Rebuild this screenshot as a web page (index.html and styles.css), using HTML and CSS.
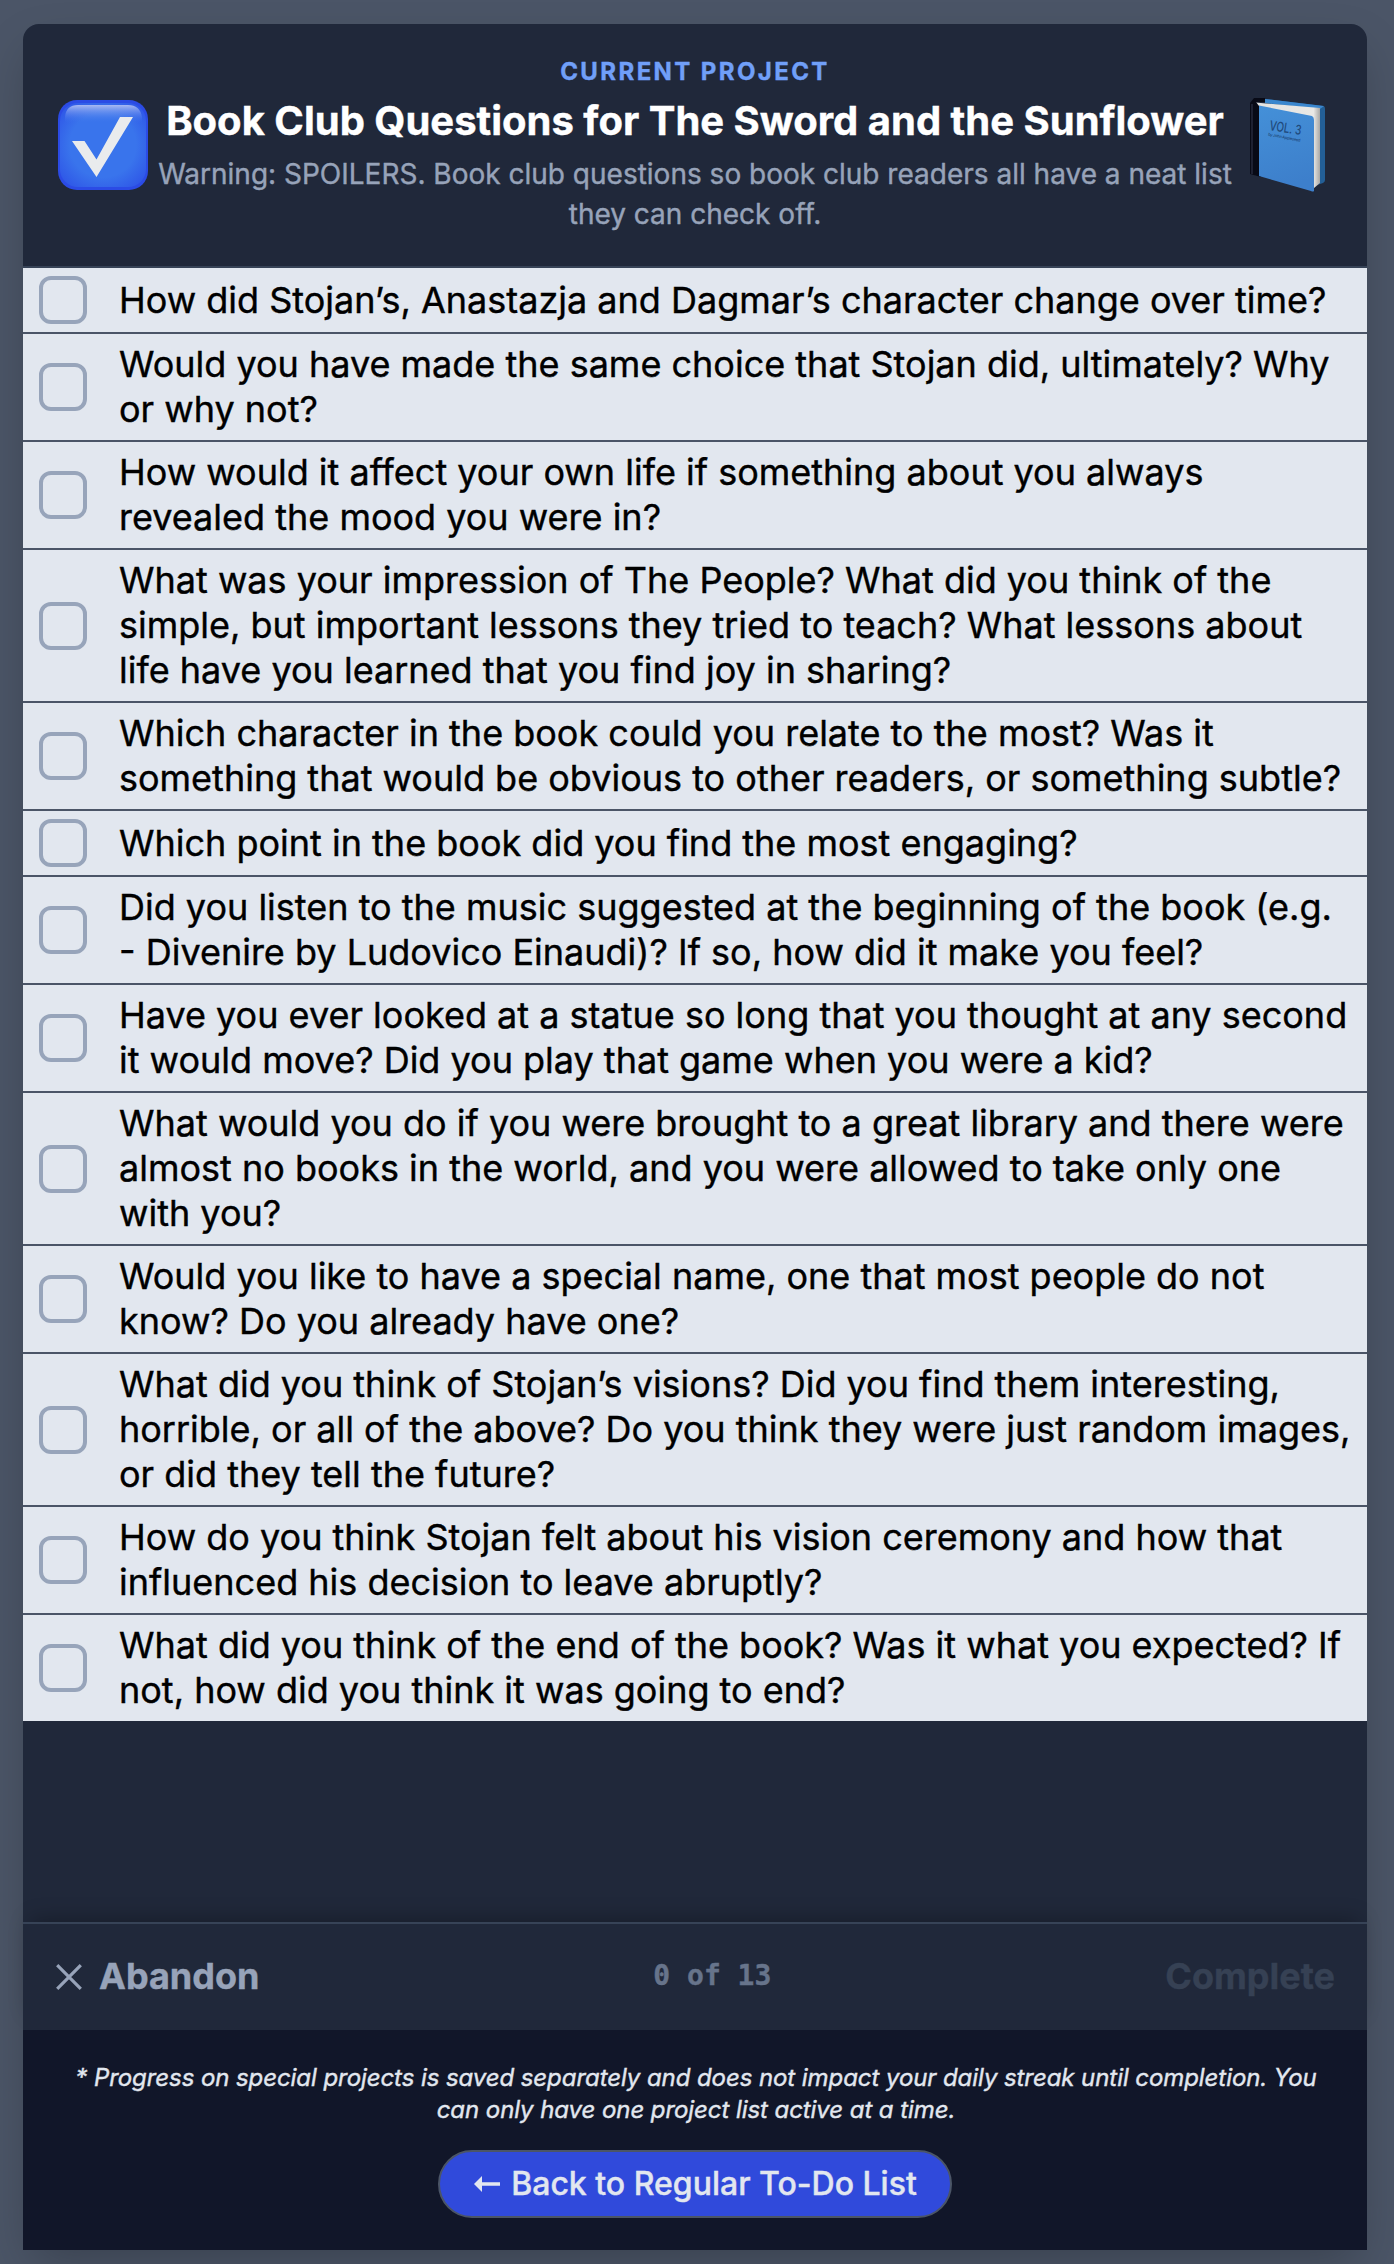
FILE: index.html
```
<!DOCTYPE html>
<html lang="en">
<head>
	<meta charset="UTF-8">
	<meta name="viewport" content="width=device-width, initial-scale=1">
	<title>Book Club Questions for The Sword and the Sunflower</title>

	<link rel="stylesheet" href="styles.css">
</head>
<body>

	<div class="card">
		<div class="header">
			<svg class="icon-check" viewBox="0 0 90 90">
				<defs>
					<radialGradient id="tile" cx="50%" cy="50%" r="70%">
						<stop offset="0.55" stop-color="#3974ec"/>
						<stop offset="1" stop-color="#2c4fe6"/>
					</radialGradient>
					<linearGradient id="shine" x1="0" y1="0" x2="0" y2="1">
						<stop offset="0" stop-color="#a9b9f2"/>
						<stop offset="1" stop-color="#3974ec" stop-opacity="0"/>
					</linearGradient>
				</defs>
				<rect width="90" height="90" rx="19" fill="#2b4be5"/>
				<rect x="2" y="3" width="86" height="84" rx="18" fill="url(#tile)"/>
				<path d="M7 17Q8 5 20 5H70Q82 5 84 17V23H7Z" fill="url(#shine)"/>
				<path d="M14 41H26.500L38.500 59.500L62 17H75L38.500 77Z" fill="#e9ebed"/>
			</svg>
			<div class="header-text">
				<p class="label">Current Project</p>
				<h1 class="title">Book Club Questions for The Sword and the Sunflower</h1>
				<p class="desc">Warning: SPOILERS. Book club questions so book club readers all have a neat list they can check off.</p>
			</div>
			<svg class="icon-book" viewBox="0 0 76 94">
				<defs>
					<linearGradient id="cover" x1="0" y1="0" x2="0.2" y2="1">
						<stop offset="0" stop-color="#4490d8"/>
						<stop offset="1" stop-color="#3d7fcb"/>
					</linearGradient>
					<linearGradient id="pages" x1="0" y1="0" x2="1" y2="0">
						<stop offset="0" stop-color="#e4e3e1"/>
						<stop offset="0.9" stop-color="#e9e8e5"/>
						<stop offset="1" stop-color="#a8a7a5"/>
					</linearGradient>
				</defs>
				<path d="M16 1L74 8Q76 8 76 11V82Q76 84 74 85L68 87V12L16 5Z" fill="#235f96"/>
				<path d="M16 1L75 8L71 11L16 5Z" fill="#3b87ce"/>
				<path d="M6 4.500L71 10V85L65 90L62 20L10 9Z" fill="url(#pages)"/>
				<path d="M1 5L5 0H16V4L7 4L10 8L12 79L1 76Z" fill="#080a16"/>
				<path d="M3 6V76" stroke="#34394f" stroke-width="1"/>
				<path d="M10 7.500L63 18Q65 19 65 22V93Q64 94 62 93L10 78Z" fill="url(#cover)"/>
				<text x="20" y="32" class="book-vol" transform="rotate(9 20 32)" textLength="32" lengthAdjust="spacingAndGlyphs">VOL. 3</text>
				<text x="19" y="37.500" class="book-by" transform="rotate(11 19 37)" textLength="33">by John Appleseed</text>
			</svg>
		</div>

		<ul class="list">
			<li><span class="checkbox"></span><p>How did Stojan’s, Anastazja and Dagmar’s character change over time?</p></li>
			<li><span class="checkbox"></span><p>Would you have made the same choice that Stojan did, ultimately? Why or why not?</p></li>
			<li><span class="checkbox"></span><p>How would it affect your own life if something about you always revealed the mood you were in?</p></li>
			<li><span class="checkbox"></span><p>What was your impression of The People? What did you think of the simple, but important lessons they tried to teach? What lessons about life have you learned that you find joy in sharing?</p></li>
			<li><span class="checkbox"></span><p>Which character in the book could you relate to the most? Was it something that would be obvious to other readers, or something subtle?</p></li>
			<li><span class="checkbox"></span><p>Which point in the book did you find the most engaging?</p></li>
			<li><span class="checkbox"></span><p>Did you listen to the music suggested at the beginning of the book (e.g. - Divenire by Ludovico Einaudi)? If so, how did it make you feel?</p></li>
			<li><span class="checkbox"></span><p>Have you ever looked at a statue so long that you thought at any second it would move? Did you play that game when you were a kid?</p></li>
			<li><span class="checkbox"></span><p>What would you do if you were brought to a great library and there were almost no books in the world, and you were allowed to take only one with you?</p></li>
			<li><span class="checkbox"></span><p>Would you like to have a special name, one that most people do not know? Do you already have one?</p></li>
			<li><span class="checkbox"></span><p>What did you think of Stojan’s visions? Did you find them interesting, horrible, or all of the above? Do you think they were just random images, or did they tell the future?</p></li>
			<li><span class="checkbox"></span><p>How do you think Stojan felt about his vision ceremony and how that influenced his decision to leave abruptly?</p></li>
			<li><span class="checkbox"></span><p>What did you think of the end of the book? Was it what you expected? If not, how did you think it was going to end?</p></li>
		</ul>

		<div class="actions">
			<button class="abandon">
				<svg viewBox="0 0 28 28"><path d="M2.200 2.200L25.800 25.800M25.800 2.200L2.200 25.800"/></svg>
				Abandon
			</button>
			<span class="count">0 of 13</span>
			<button class="complete" disabled>Complete</button>
		</div>

		<div class="note">
			<p>* Progress on special projects is saved separately and does not impact your daily streak until completion. You can only have one project list active at a time.</p>
			<a class="back" href="#">
				<svg viewBox="0 0 26 16"><path d="M0 8L8 0V6.200H26V9.800H8V16Z"/></svg>
				Back to Regular To-Do List
			</a>
		</div>
	</div>

</body>
</html>
```
FILE: styles.css
```
*{
	margin: 0;
	padding: 0;
	box-sizing: border-box;
}

body{
	min-height: 2264px;
	padding: 24px 27px 14px 23px;
	background: #4b5567;
	font-family: Inter, sans-serif;
	-webkit-text-stroke: 0.4px;
}

ul{
	list-style: none;
}

button{
	background: none;
	border: 0;
	font: inherit;
}

.card{
	display: flex;
	flex-direction: column;
	height: 2226px;
	background: #20283a;
	border-radius: 16px 16px 0 0;
	box-shadow: 0 20px 50px -10px rgba(0,0,0,0.25);
}

/*header*/
.header{
	display: flex;
	justify-content: space-between;
	padding: 32px 42px 32px 35px;
	height: 244px;
	border-bottom: 2px solid #374357;
}

.icon-check{
	width: 90px;
	height: 90px;
	margin-top: 44px;
	flex: none;
}

.icon-book{
	width: 76px;
	height: 94px;
	margin-top: 42px;
	flex: none;
}

.header-text{
	flex: none;
	width: 1080px;
	text-align: center;
	margin-right: 7px;
}

.label{
	color: #709ff8;
	font-size: 24px;
	font-weight: 700;
	line-height: 32px;
	letter-spacing: 0.1em;
	text-transform: uppercase;
}

.title{
	margin: 8px 0;
	color: #fff;
	font-size: 40px;
	font-weight: 700;
	line-height: 50px;
}

.desc{
	color: #97a3b9;
	font-size: 28px;
	line-height: 40px;
}

.book-vol{
	font-size: 13.5px;
	font-weight: 500;
	fill: #204a7c;
}

.book-by{
	font-size: 4px;
	font-weight: 500;
	fill: #204a7c;
}

/*questions*/
.list{
	flex: 1;
}

.list li{
	display: flex;
	align-items: center;
	gap: 32px;
	padding: 8px 16px;
	background: #e2e7ef;
	border-bottom: 2px solid #4b5567;
	color: #000;
	font-size: 36px;
	line-height: 45px;
}

.list li:last-child{
	border-bottom: 0;
}

.checkbox{
	flex: none;
	width: 48px;
	height: 48px;
	border: 4px solid #97a4ba;
	border-radius: 12px;
}

/*abandon / count / complete*/
.actions{
	display: flex;
	align-items: center;
	justify-content: space-between;
	height: 108px;
	padding: 0 32px 3px;
	background: #20283a;
	border-top: 2px solid #374357;
	box-shadow: 0 -10px 20px -8px rgba(0,0,0,0.3);
	font-size: 36px;
	font-weight: 700;
}

.abandon{
	display: flex;
	align-items: center;
	gap: 16px;
	color: #97a3b9;
}

.abandon svg{
	width: 28px;
	height: 28px;
	margin-top: 2px;
	stroke: currentColor;
	stroke-width: 3.2;
}

.count{
	color: #67748b;
	font-family: "DejaVu Sans Mono", monospace;
	font-size: 28px;
}

.complete{
	color: #364154;
}

/*bottom note*/
.note{
	display: flex;
	flex-direction: column;
	align-items: center;
	gap: 24px;
	height: 220px;
	padding: 32px 48px;
	background: #111629;
	color: #e2e7ef;
}

.note p{
	padding-left: 2px;
	font-size: 24px;
	font-style: italic;
	line-height: 32px;
	letter-spacing: -0.075px;
	text-align: center;
}

.back{
	display: flex;
	align-items: center;
	justify-content: center;
	gap: 11px;
	width: 514px;
	height: 68px;
	padding: 0 0 2px 1px;
	background: #304adb;
	border: 2px solid #4b5567;
	border-radius: 34px;
	color: #e2e7ef;
	font-size: 32px;
	font-weight: 500;
	text-decoration: none;
}

.back svg{
	width: 26px;
	height: 16px;
	margin-top: 1px;
	fill: currentColor;
}
```
